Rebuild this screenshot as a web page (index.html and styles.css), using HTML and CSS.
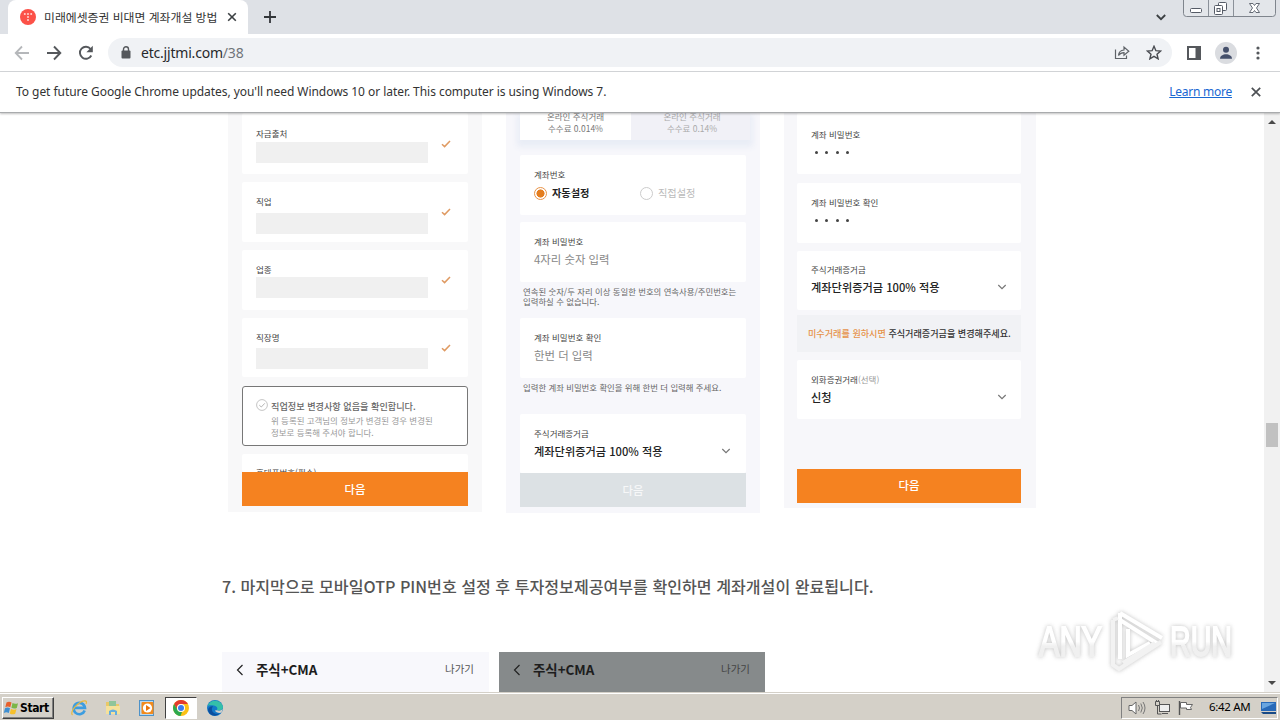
FILE: index.html
```html
<!DOCTYPE html>
<html lang="ko">
<head>
<meta charset="utf-8">
<title>미래에셋증권 비대면 계좌개설 방법</title>
<link rel="stylesheet" href="styles.css">
</head>
<body>
<svg class="defs" width="0" height="0">
  <symbol id="tick" viewBox="0 0 10 8"><path d="M1 4.2 3.6 6.6 9 1" fill="none" stroke="#df9a62" stroke-width="1.5"/></symbol>
  <symbol id="chev" viewBox="0 0 10 6"><path d="M1.3 1 5 4.6 8.7 1" fill="none" stroke="#777" stroke-width="1.2"/></symbol>
  <symbol id="back" viewBox="0 0 8 12"><path d="M6.5 1 1.5 6l5 5" fill="none" stroke="#222" stroke-width="1.2"/></symbol>
</svg>

<header class="tabstrip">
  <div class="tab">
    <svg class="favicon" width="16" height="16" viewBox="0 0 16 16"><circle cx="8" cy="8" r="8" fill="#fc5148"/><g fill="#ffd5d0"><circle cx="4.8" cy="5" r="1"/><circle cx="8" cy="5" r="1"/><circle cx="11.2" cy="5" r="1"/><circle cx="8" cy="8" r="1"/><circle cx="8" cy="11" r="1"/></g></svg>
    <span class="tab-title">미래에셋증권 비대면 계좌개설 방법</span>
    <svg class="tab-close" width="10" height="10" viewBox="0 0 10 10"><path d="M1.2 1.2l7.6 7.6M8.8 1.2 1.2 8.8" stroke="#3c4043" stroke-width="1.6"/></svg>
  </div>
  <svg class="new-tab" width="12" height="12" viewBox="0 0 12 12"><path d="M6 0v12M0 6h12" stroke="#33363a" stroke-width="1.8"/></svg>
  <svg class="tab-search" width="10" height="7" viewBox="0 0 10 7"><path d="M.8 1 5 5.2 9.2 1" fill="none" stroke="#3c4043" stroke-width="1.8"/></svg>
  <svg class="caption" width="94" height="18" viewBox="0 0 94 18">
    <path d="M.5-1V13.500q0 3 3 3H89.500q3 0 3-3V-1" fill="#e3e6ea" stroke="#7f858d"/>
    <path d="M25.500 0v16M50.500 0v16" stroke="#8b9199"/>
    <rect x="7.500" y="8.500" width="11" height="4" rx="1" fill="#fff" stroke="#555b66"/>
    <rect x="35.500" y="2.500" width="8" height="8" rx="1" fill="#fff" stroke="#555b66"/>
    <rect x="31.500" y="5.500" width="8" height="9" rx="1" fill="#fff" stroke="#555b66"/>
    <rect x="34" y="8.500" width="3" height="3" fill="none" stroke="#555b66"/>
    <path d="M66.500 3.500h3.500l1.500 2 1.500-2h3.500l-3 4.500 3 4.500h-3.500l-1.500-2-1.500 2h-3.500l3-4.500z" fill="#fff" stroke="#555b66" stroke-width=".9"/>
  </svg>
</header>

<nav class="toolbar">
  <svg width="16" height="16" viewBox="0 0 16 16"><path d="M15 8H2M8 1.500 1.700 8 8 14.500" fill="none" stroke="#b5b7ba" stroke-width="1.800"/></svg>
  <svg width="16" height="16" viewBox="0 0 16 16"><path d="M1 8h13M8 1.500 14.300 8 8 14.500" fill="none" stroke="#55585c" stroke-width="1.900"/></svg>
  <svg width="16" height="16" viewBox="0 0 16 16"><path d="M13.300 10.500A6 6 0 1 1 12.600 4" fill="none" stroke="#55585c" stroke-width="1.900"/><path d="M14.800.8v6.400H8.400z" fill="#55585c"/></svg>
  <div class="omnibox">
    <svg width="10" height="13" viewBox="0 0 10 13"><rect x=".5" y="4.500" width="9" height="8" rx="1" fill="#55585c"/><path d="M2.500 5V3.300a2.500 2.500 0 0 1 5 0V5" fill="none" stroke="#55585c" stroke-width="1.400"/></svg>
    <span class="url">etc.jjtmi.com<i>/38</i></span>
    <svg class="share" width="16" height="15" viewBox="0 0 16 15"><path d="M1.500 4.500v9h11v-3M4.500 10.500c.3-3.500 2-5.300 5.500-5.500V2l4.800 4.200L10 10.300V7.600c-2.500 0-4.200.9-5.500 2.900z" fill="none" stroke="#5f6368" stroke-width="1.200"/></svg>
    <svg width="16" height="15" viewBox="0 0 16 15"><path d="M8 1.300 9.900 5.700l4.700.4-3.600 3.100 1.100 4.600L8 11.300l-4.100 2.500L5 9.200 1.400 6.100l4.700-.4z" fill="none" stroke="#484b50" stroke-width="1.400"/></svg>
  </div>
  <svg class="panel-icon" width="14" height="14" viewBox="0 0 14 14"><path d="M1 1h12v12H1z" fill="none" stroke="#55585c" stroke-width="2"/><path d="M8.500 1H13v12H8.500z" fill="#55585c"/></svg>
  <svg class="avatar" width="22" height="22" viewBox="0 0 22 22"><circle cx="11" cy="11" r="11" fill="#dadce0"/><circle cx="11" cy="7.800" r="3" fill="#45506b"/><path d="M5 16.800c0-3 3-4.600 6-4.600s6 1.600 6 4.600z" fill="#45506b"/></svg>
  <svg class="dots" width="4" height="14" viewBox="0 0 4 14"><g fill="#55585c"><circle cx="2" cy="2" r="1.600"/><circle cx="2" cy="7" r="1.600"/><circle cx="2" cy="12" r="1.600"/></g></svg>
</nav>

<div class="infobar">
  <span class="info-text">To get future Google Chrome updates, you'll need Windows 10 or later. This computer is using Windows 7.</span>
  <a class="learn">Learn more</a>
  <svg width="10" height="10" viewBox="0 0 10 10"><path d="M.8.8l8.400 8.400M9.200.8.800 9.200" stroke="#4d5054" stroke-width="1.700"/></svg>
</div>

<main class="viewport">
  <article class="page">
    <div class="phones">
      <section class="phone first">
        <div class="card filled c-a"><label>자금출처</label><div class="bar"></div><svg class="tick"><use href="#tick"/></svg></div>
        <div class="card filled c-b"><label>직업</label><div class="bar"></div><svg class="tick"><use href="#tick"/></svg></div>
        <div class="card filled c-c"><label>업종</label><div class="bar"></div><svg class="tick"><use href="#tick"/></svg></div>
        <div class="card filled c-d"><label>직장명</label><div class="bar"></div><svg class="tick"><use href="#tick"/></svg></div>
        <div class="notice">
          <svg width="12" height="12" viewBox="0 0 12 12"><circle cx="6" cy="6" r="5.400" fill="none" stroke="#c4c4c4"/><path d="M3.300 6.200 5.300 8l3.500-3.700" fill="none" stroke="#b5b5b5"/></svg>
          <div><strong>직업정보 변경사항 없음을 확인합니다.</strong><p>위 등록된 고객님의 정보가 변경된 경우 변경된<br>정보로 등록해 주셔야 합니다.</p></div>
        </div>
        <div class="card cut"><label>휴대폰번호(필수)</label></div>
        <div class="next">다음</div>
      </section>

      <section class="phone second">
        <div class="fee-tabs"><div class="fee on">온라인 주식거래<br>수수료 0.014%</div><div class="fee">온라인 주식거래<br>수수료 0.14%</div></div>
        <div class="card choice"><label>계좌번호</label>
          <div class="radios"><span class="radio on"></span><b>자동설정</b><span class="radio"></span><em>직접설정</em></div>
        </div>
        <div class="card entry"><label>계좌 비밀번호</label><div class="hint">4자리 숫자 입력</div></div>
        <p class="help">연속된 숫자/두 자리 이상 동일한 번호의 연속사용/주민번호는<br>입력하실 수 없습니다.</p>
        <div class="card entry"><label>계좌 비밀번호 확인</label><div class="hint">한번 더 입력</div></div>
        <p class="help">입력한 계좌 비밀번호 확인을 위해 한번 더 입력해 주세요.</p>
        <div class="card entry"><label>주식거래증거금</label><div class="select"><span>계좌단위증거금 100% 적용</span><svg><use href="#chev"/></svg></div></div>
        <div class="next off">다음</div>
      </section>

      <section class="phone third">
        <div class="card pin p-a"><label>계좌 비밀번호</label><div class="pins"><i></i><i></i><i></i><i></i></div></div>
        <div class="card pin p-b"><label>계좌 비밀번호 확인</label><div class="pins"><i></i><i></i><i></i><i></i></div></div>
        <div class="card entry p-c"><label>주식거래증거금</label><div class="select"><span>계좌단위증거금 100% 적용</span><svg><use href="#chev"/></svg></div></div>
        <div class="banner"><span>미수거래를 원하시면</span> 주식거래증거금을 변경해주세요.</div>
        <div class="card entry p-d"><label>외화증권거래<small>(선택)</small></label><div class="select"><span>신청</span><svg><use href="#chev"/></svg></div></div>
        <div class="next">다음</div>
      </section>
    </div>

    <h2 class="step">7. 마지막으로 모바일OTP PIN번호 설정 후 투자정보제공여부를 확인하면 계좌개설이 완료됩니다.</h2>

    <div class="heads">
      <div class="head"><svg width="8" height="12"><use href="#back"/></svg><strong>주식+CMA</strong><span>나가기</span></div>
      <div class="head dim"><svg width="8" height="12"><use href="#back"/></svg><strong>주식+CMA</strong><span>나가기</span></div>
    </div>
  </article>
  <div class="scroll">
    <svg width="8" height="4" viewBox="0 0 8 4"><path d="M0 4l4-4 4 4z" fill="#4a4a4a"/></svg>
    <div class="thumb"></div>
    <svg class="down" width="8" height="4" viewBox="0 0 8 4"><path d="M0 0l4 4 4-4z" fill="#4a4a4a"/></svg>
  </div>
  <svg class="mark" width="210" height="76" viewBox="0 0 210 76">
    <defs><linearGradient id="fade" x1="0" y1="0" x2="0" y2="1"><stop offset=".5" stop-color="#fff"/><stop offset=".6" stop-color="#efefef"/></linearGradient></defs>
    <g class="mark-ink">
      <text x="9" y="53" textLength="63" lengthAdjust="spacingAndGlyphs">ANY</text>
      <text x="140" y="53" textLength="62" lengthAdjust="spacingAndGlyphs">RUN</text>
      <path d="M90 10 132 35 M90 10V56M90 17l38 24M98 26v26l22-12" fill="none" stroke="#fff" stroke-width="4"/>
      <path d="M83 17v45l6 4 42-27M93 60l32-20M83 17l5-2" fill="none" stroke="#f1f1f1" stroke-width="4"/>
    </g>
  </svg>
</main>

<footer class="taskbar">
  <div class="start"><svg width="17" height="16" viewBox="0 0 17 16"><path d="M3.500 2.500q2.500-1.500 5 0L7.300 7.300q-2.500-1.400-5 0z" fill="#e8602c"/><path d="M9.500 3q2.500 1.500 5.500.2L13.800 8q-3 1.200-5.400-.3z" fill="#7ab648"/><path d="M2 8.300q2.500-1.400 5 0l-1.200 4.600q-2.500-1.500-5 0z" fill="#3f8fd2"/><path d="M8 8.800q2.500 1.500 5.500.3l-1.300 4.600q-2.800 1.300-5.400-.3z" fill="#f6c02c"/></svg>Start</div>
  <div class="quick">
    <svg width="18" height="18" viewBox="0 0 18 18"><path d="M14.700 11.500A5.700 5.700 0 1 1 15 8.900H5" fill="none" stroke="#3d9de0" stroke-width="2.600"/><path d="M2.500 16C-1 13.500 8 2.500 14.500 1.800c2.300-.2 2.300 1.700 1.500 3.200" fill="none" stroke="#e9b93e" stroke-width="1.200"/></svg>
    <svg width="18" height="18" viewBox="0 0 18 18"><path d="M2 3h6l1 2h6v10H2z" fill="#e9c868"/><path d="M5 2h7v5H5z" fill="#8fc59a"/><path d="M2 7h14v8H2z" fill="#f5e19a"/><path d="M5 16v-4q4-3 8 0v4h-2v-3H7v3z" fill="#64aede"/></svg>
    <svg width="18" height="18" viewBox="0 0 18 18"><rect x="1.500" y="1.500" width="14" height="15" fill="#b9d8ef" stroke="#4d92c9"/><rect x="3.500" y="3" width="12" height="12" rx="1" fill="#f28a1c"/><circle cx="9.500" cy="9" r="4.600" fill="#fff"/><path d="M8 6v6l4.500-3z" fill="#e8740c"/></svg>
    <div class="active"><svg width="16" height="16" viewBox="0 0 16 16"><circle cx="8" cy="8" r="8" fill="#fbc116"/><path d="M1.100 4A8 8 0 0 1 14.900 4H8a4 4 0 0 0-3.500 6z" fill="#e33b2e"/><path d="M1.100 4 4.600 10A4 4 0 0 0 9 11.900L7.500 16A8 8 0 0 1 1.100 4z" fill="#2da94f"/><circle cx="8" cy="8" r="4" fill="#fff"/><circle cx="8" cy="8" r="3" fill="#3b7ded"/></svg></div>
    <svg width="18" height="18" viewBox="0 0 18 18"><circle cx="9" cy="9" r="8" fill="#1379c9"/><path d="M1.500 7C4 0 15 0 17 8c0 3-3 4-6 3 1-2 0-4-3-4.500C5 6 2.500 6 1.500 7z" fill="#35bfa9"/><path d="M6 9c-1 4 3 7 8 5.200C10 18.500 3 17 2 11c0-2 2-4 5-3.800z" fill="#0c4f9e"/><path d="M11 11.200c2 1 5 .3 6-1.700l-1.500 4c-2 1-6 0-6.500-2z" fill="#d5d1ca"/></svg>
  </div>
  <div class="tray">
    <svg width="18" height="16" viewBox="0 0 18 16"><path d="M1 5.500h3L8 2v12l-4-3.500H1z" fill="#fff" stroke="#666"/><path d="M10.500 5q2 3 0 6M12.800 3.500q3 4.500 0 9M15 2q4 6 0 12" fill="none" stroke="#777"/></svg>
    <svg width="16" height="16" viewBox="0 0 16 16"><rect x="5.500" y="4.500" width="10" height="7" fill="#eee" stroke="#555"/><path d="M8 13.500h6M1.500 1.500v4h4v-4zM3.500 6v8h4" fill="none" stroke="#555"/><path d="M2.500 0v2M4.500 0v2" stroke="#555"/></svg>
    <svg width="16" height="16" viewBox="0 0 16 16"><path d="M1.500 1v14" stroke="#555" stroke-width="1.400"/><path d="M2.500 2.500h6v2h6l-2 3 1 2h-5v-1.500h-6z" fill="#fff" stroke="#666"/></svg>
    <time>6:42 AM</time>
    <svg class="desk" width="16" height="14" viewBox="0 0 16 14"><path d="M0 1h15v9H0z" fill="#2769b8"/><path d="M1 2h13L1 8z" fill="#69a5df"/><path d="M0 11h15v2H2z" fill="#184a86"/></svg>
  </div>
</footer>
</body>
</html>
```
FILE: styles.css
```css
* { box-sizing: border-box; }
body { margin: 0; width: 1280px; height: 720px; overflow: hidden; display: flex; flex-direction: column; background: #fff; font-family: "Noto Sans CJK KR", "Noto Sans", sans-serif; color: #444; }
p, h2 { margin: 0; }
svg { display: block; flex: none; }
.defs { position: absolute; }

.tabstrip { height: 34px; flex: none; display: flex; background: #dee1e6; padding-left: 8px; }
.tab { width: 240px; display: flex; align-items: center; background: #fff; border-radius: 8px 8px 0 0; padding-left: 12px; }
.tab-title { margin-left: 8px; width: 183px; font-size: 11.850px; line-height: 16px; padding-bottom: 1px; color: #333; white-space: nowrap; }
.new-tab { margin: 11px 0 0 16px; }
.tab-search { margin: 14px 17px 0 auto; }
.caption { margin-right: 3px; }

.toolbar { height: 38px; flex: none; display: flex; align-items: center; border-bottom: 1px solid #d5d7da; padding: 0 20px 0 14px; gap: 16px; }
.omnibox { width: 1064px; height: 29px; margin-left: -2px; border-radius: 15px; background: #f0f2f5; display: flex; align-items: center; padding: 0 10px 0 13px; }
.url { margin: 0 auto 0 10px; font: 14px/20px "Noto Sans", sans-serif; letter-spacing: -.2px; color: #27292c; }
.url i { font-style: normal; color: #70757a; }
.share { margin-right: 16px; }
.panel-icon { margin-left: -1px; }
.avatar { margin-left: -2px; }
.dots { margin-left: 3px; }

.infobar { height: 41px; flex: none; position: relative; z-index: 1; background: #fff; display: flex; align-items: center; padding: 0 19px 0 16px; border-bottom: 1px solid #a9abad; box-shadow: 0 1px 2px rgba(0, 0, 0, .25); font: 12px/18px "Noto Sans", sans-serif; color: #333; }
.info-text { margin-right: auto; letter-spacing: -.05px; }
.learn { color: #1967d2; text-decoration: underline; margin-right: 19px; letter-spacing: -.25px; }

.viewport { height: 579px; flex: none; position: relative; display: flex; }
.page { width: 1264px; padding-left: 222px; overflow: hidden; }
.phones { display: flex; align-items: flex-start; gap: 24px; padding-left: 6px; height: 452px; }
.phone { width: 254px; height: 399px; padding: 0 14px; background: #f8f8f9; display: flex; flex-direction: column; overflow: hidden; }
.second { height: 400px; background: #f7f7fb; }
.third { width: 252px; height: 395px; padding: 0 15px 0 13px; background: #f7f7fa; }
.card { flex: none; background: #fff; border-radius: 2px; }
label { display: block; font-size: 8.500px; line-height: 10px; padding-bottom: 2px; color: #444; white-space: nowrap; }
small { font-size: 8.500px; color: #999; }

.filled { display: grid; grid-template-columns: 172px 10px; column-gap: 13px; align-content: start; padding: 14px 0 0 14px; height: 60px; margin-bottom: 8px; }
.filled label { grid-column: 1 / 3; }
.bar { height: 21px; background: #f0f0f0; margin-top: 4px; }
.tick { width: 10px; height: 8px; }
.c-a { height: 61px; padding-top: 15px; }
.c-a .bar { margin-top: 2px; }
.c-b .bar { margin-top: 5px; }
.c-c .bar { margin-top: 1px; }
.c-d { height: 59px; margin-bottom: 9px; }
.notice { height: 60px; flex: none; margin-bottom: 8px; border: 1px solid #777; border-radius: 3px; background: #fff; display: flex; gap: 3px; padding: 12px 0 0 13px; white-space: nowrap; }
.notice strong { display: block; font-size: 9.150px; line-height: 14px; font-weight: 500; color: #666; }
.notice p { font-size: 8.450px; line-height: 11.500px; color: #999; padding-top: 2px; }
.cut { height: 18px; padding: 13px 0 0 14px; overflow: hidden; }
.next { flex: none; height: 34px; background: #f58220; color: #fff; text-align: center; font-size: 11.400px; line-height: 34px; font-weight: 500; }
.third .next { line-height: 32px; }
.off { background: #dce1e4; color: #f6f7f8; }

.fee-tabs { display: flex; height: 27px; flex: none; width: 230px; margin-bottom: 15px; box-shadow: 0 4px 6px 3px #e9edf6; background: #f1f1f7; }
.fee { flex: none; width: 122px; margin-top: -3px; font-size: 8.500px; line-height: 12px; text-align: center; color: #aaa; white-space: nowrap; }
.fee.on { width: 111px; height: 30px; background: #fff; color: #777; }
.choice { height: 60px; margin-bottom: 7px; padding: 14px 0 0 14px; }
.radios { display: flex; align-items: center; height: 14px; margin-top: 5px; font-size: 10.200px; line-height: 14px; }
.radios b { width: 88px; margin-left: 5px; color: #222; }
.radios em { font-style: normal; margin-left: 5px; color: #bbb; }
.radio { width: 13px; height: 13px; border: 1px solid #ccc; border-radius: 50%; }
.radio.on { border-color: #e89348; background: radial-gradient(circle, #e47d1e 3.800px, #fff 4.300px); }
.entry { height: 60px; padding: 14px 14px 0; }
.hint { font-size: 11.400px; line-height: 18px; color: #888; margin-top: 2px; white-space: nowrap; }
.help { flex: none; height: 36px; font-size: 8.400px; line-height: 10px; color: #666; padding: 4px 0 0 3px; white-space: nowrap; }
.select { display: flex; align-items: flex-start; justify-content: space-between; height: 18px; margin-top: 3px; font-size: 11.200px; line-height: 16px; font-weight: 500; color: #222; white-space: nowrap; }
.select svg { width: 10px; height: 6px; margin-top: 5px; }
.second .select { padding-right: 1px; }
.second .entry:nth-last-child(2) { height: 59px; }

.pin { height: 60px; padding: 14px 0 0 14px; }
.pins { display: flex; gap: 7.400px; padding: 10px 0 0 4px; }
.pins i { width: 3px; height: 3px; border-radius: 50%; background: #444; }
.p-a { height: 61px; padding-top: 16px; margin-bottom: 9px; }
.p-b { margin-bottom: 8px; }
.p-c { height: 59px; margin-bottom: 5px; padding-top: 13px; }
.banner { height: 37px; flex: none; margin-bottom: 8px; background: #f1f2f5; padding-left: 11px; font-size: 9.100px; line-height: 37px; font-weight: 500; color: #333; white-space: nowrap; }
.banner span { color: #e6924a; }
.p-d { height: 59px; margin-bottom: 50px; }

.step { height: 87px; font-size: 16.100px; line-height: 42px; font-weight: 500; color: #555; white-space: nowrap; }
.heads { display: flex; gap: 10px; }
.head { width: 267px; height: 60px; background: #f8f8fc; display: flex; padding: 0 15px 0 14px; line-height: 34px; color: #1d1d1d; }
.head svg { margin: 12px 12px 0 0; }
.head strong { font-size: 13.400px; }
.head span { margin-left: auto; font-size: 10.500px; color: #555; }
.head.dim { background: #868a8b; width: 266px; }
.dim span { color: #444; }

.scroll { width: 16px; background: #f1f1f1; display: flex; flex-direction: column; align-items: center; padding: 7px 0; }
.thumb { width: 12px; height: 24px; margin-top: 299px; background: #c1c1c1; }
.down { margin-top: auto; }
.mark { position: absolute; left: 1030px; top: 490px; }
.mark-ink { filter: drop-shadow(0 0 2px #bbb); opacity: .9; }
.mark-ink text { font: 42px "Liberation Sans", sans-serif; fill: url(#fade); stroke: url(#fade); stroke-width: 2; }

.taskbar { height: 28px; flex: none; background: #d4d0c8; border-top: 1px solid #d4d0c8; box-shadow: inset 0 1px #fff; display: flex; align-items: center; padding: 2px 2px 0; font: 11px/14px "DejaVu Sans", sans-serif; color: #000; }
.start { width: 52px; height: 22px; display: flex; align-items: center; border: 1px solid; border-color: #fff #404040 #404040 #fff; box-shadow: inset -1px -1px #808080; font: bold 12px "DejaVu Sans Condensed", "DejaVu Sans", sans-serif; letter-spacing: -.4px; }
.quick { display: flex; align-items: center; margin-left: 16px; gap: 16px; }
.active { width: 32px; height: 22px; margin: 0 -7px; background: #fff; border: 1px solid; border-color: #404040 #fff #fff #404040; display: flex; align-items: center; justify-content: center; }
.tray { margin-left: auto; width: 157px; height: 22px; display: flex; align-items: center; gap: 8px; padding-left: 6px; border: 1px solid; border-color: #808080 #fff #fff #808080; }
.tray time { margin-left: 7px; width: 44px; font: 11.500px/14px "Noto Sans", sans-serif; letter-spacing: -.3px; padding-bottom: 1px; white-space: nowrap; }
```
